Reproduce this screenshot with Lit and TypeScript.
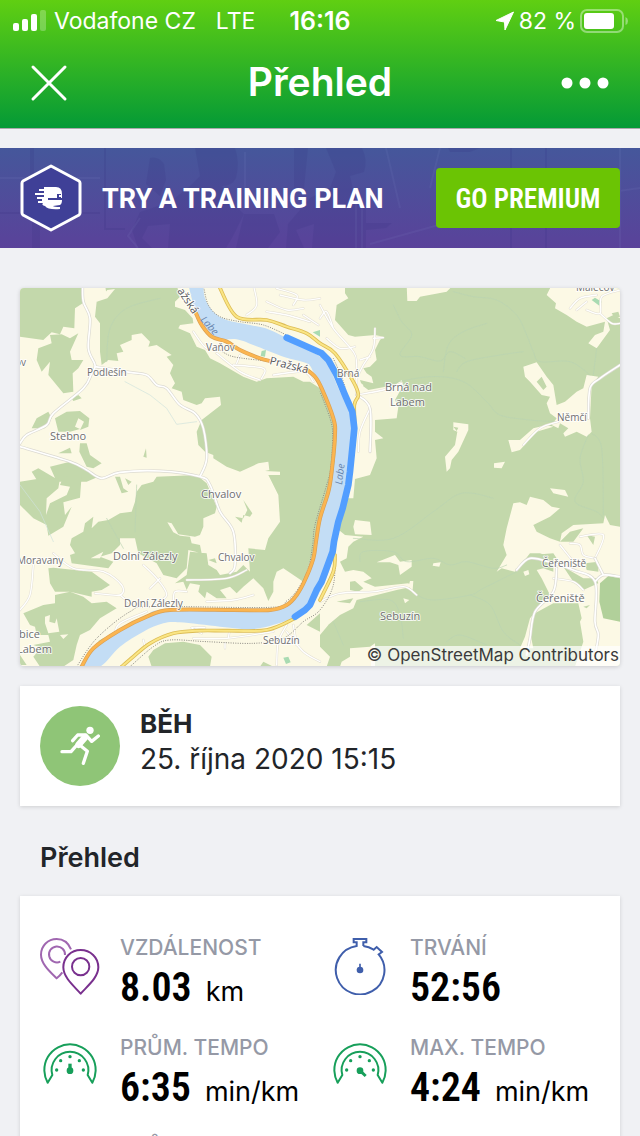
import { LitElement, html, css, svg } from "lit";
import { customElement, property } from "lit/decorators.js";

/** Turns "M x,y x,y ... M ..." polylines into curves that pass through every point. */
function smooth(path: string): string {
  return path
    .split("M")
    .filter((part) => part.trim())
    .map((part) => {
      const pts = part.trim().split(/\s+/).map((p) => p.split(",").map(Number));
      let d = `M${pts[0][0]} ${pts[0][1]}`;
      for (let i = 0; i < pts.length - 1; i++) {
        const a = pts[Math.max(i - 1, 0)];
        const b = pts[i];
        const c = pts[i + 1];
        const e = pts[Math.min(i + 2, pts.length - 1)];
        d += `C${b[0] + (c[0] - a[0]) / 6} ${b[1] + (c[1] - a[1]) / 6} ${c[0] - (e[0] - b[0]) / 6} ${c[1] - (e[1] - b[1]) / 6} ${c[0]} ${c[1]}`;
      }
      return d;
    })
    .join("");
}

const river = smooth(
  "M505,0 530,90 560,145 600,163 650,163 700,180 790,215 860,235 880,260 900,290 925,350 945,430 950,470 940,560 930,620 905,690 890,760 885,810 860,880 835,930 800,960 750,975 650,978 430,975 380,990 290,1040 215,1100 185,1145 240,1145 300,1085 370,1040 430,1015 480,1012 600,1025 700,1032 790,1010 830,990 880,950 900,920 930,850 945,760 975,650 985,560 1000,440 995,390 960,320 920,230 900,215 830,175 750,135 690,120 620,105 580,80 555,40 550,0"
);
const roads = smooth(
  "M188,0 190,50 210,100 205,190 225,240 215,265 190,310 100,385 80,420 20,450 0,475M225,245 330,262 380,270 410,300 440,310 480,360 525,385 550,430 560,520 540,575M0,485 150,530 200,555 245,580 300,562 420,558 540,575 570,600 600,680 640,740 645,840 630,865M1010,330 1050,370 1050,500M1800,240 1740,280 1710,310 1705,400M1490,855 1530,820 1600,835 1660,855 1725,890 1725,1010 1735,1050 1725,1110M1725,890 1750,870 1800,875M1610,850 1600,920 1545,980 1530,1060 1520,1110M1725,820 1750,870"
);
const streets = smooth(
  "M40,840 30,930 0,975M100,805 160,850 250,860 305,900 300,930 225,925M300,930 330,955M370,840 410,880 440,930 400,960M420,880 390,910M500,885 620,880 680,855M460,950 465,920 500,920M560,950 640,945 700,930M520,140 560,190 600,180M590,205 660,260 720,285M640,240 730,250 725,280M660,210 650,235M760,270 850,260 880,290M700,0 710,60 680,90M740,50 800,75 850,70M740,80 800,90 870,110M780,30 850,45 900,40M770,10 830,30 820,60M850,90 895,120M900,60 940,130 1000,200 1010,240 1010,330M900,100 920,80 940,130M920,160 960,190 1005,185M1065,130 1060,190 1030,240 1010,280M1060,160 1090,158M1020,225 1050,215M1010,330 1090,315 1145,295M1050,370 1020,440 1015,500M1650,70 1680,40 1730,30M1670,75 1700,50M1700,75 1740,85 1745,35 1800,15M1740,85 1775,115 1800,115M1615,410 1560,430 1510,480M1620,780 1660,830M1650,775 1680,780 1690,810 1725,820M1680,755 1750,750 1725,820M1600,880 1660,890 1690,915M900,950 960,925 1065,920 1150,905 1190,930M520,1060 620,1060 760,1040M615,1090 615,1075M770,1140 775,1070 800,1020M800,1040 850,1100 900,1130M820,1020 830,1080M370,1065 375,1085M285,1045 300,1015 380,980M545,1045 515,1028 555,1028M625,1060 628,1040"
);
const main = smooth(
  "M528,85 545,120 575,155 620,170 660,195 720,220 750,228M855,250 885,275 905,310 940,400 945,450 935,560 925,620 900,700 888,770 880,820 855,885 830,930 800,960 750,975 640,975 450,975 380,995 300,1035 220,1090 185,1145"
);
const second = smooth(
  "M598,5 650,95 740,105 800,125 860,145 900,175 945,205 1000,290 1015,330 1003,360 1004,440 992,560M945,810 940,860 900,945M825,1000 740,1035 620,1037 540,1037 460,1045 390,1075 340,1115 305,1145"
);
const rail = smooth(
  "M550,0 565,60 600,95 660,110 730,120 800,150M600,195 640,215 740,228M170,1145 230,1060 330,980 400,965 750,967 800,948 835,910 865,850 878,780 885,720 920,600 932,550 938,450 930,400 900,320M330,1145 400,1085 450,1065 560,1070 700,1075 790,1060 850,1010 900,975 940,900 945,800M940,220 970,290 990,370"
);
const tracks = smooth(
  "M1120,60 1145,110 1175,150 1140,210 1200,215 1260,228 1290,200 1335,220M1270,260 1285,180 1330,140 1400,115M1300,20 1360,35 1430,45 1490,90 1520,150 1540,200 1560,230 1650,230 1710,270M1090,300 1230,275 1330,290 1400,350 1440,390 1530,405 1610,410M1310,260 1340,230 1440,210 1510,200M1720,270 1730,190M1705,450 1680,520 1690,590 1665,650 1730,680 1750,700M1715,445 1745,490 1750,690M1000,760 1120,760 1240,680 1310,630 1360,625 1420,640M1020,830 1030,800 1120,800 1160,830 1240,820 1290,840 1340,830 1420,850 1460,840M1190,930 1240,945 1350,930 1390,910 1490,860M1350,930 1410,960 1450,1040 1500,1080M1020,950 1110,945 1140,990 1150,1060M1280,1070 1320,1050 1400,1080M940,1010 970,1080M260,230 270,130 320,70 420,40M350,600 345,740M260,700 310,790"
);

@customElement("route-map")
class RouteMap extends LitElement {
  static styles = css`
    :host { display: block; border-radius: 4px; overflow: hidden; box-shadow: 0 1px 4px rgba(0, 0, 0, 0.16); }
    .map { display: block; width: 100%; height: auto; background: #fcf9e5; }
    .wood { fill: #c3d8ab; }
    .field { fill: #fcf9e5; }
    .park { fill: #b1d09a; }
    .pitch { fill: #a9dbb2; }
    .water { fill: #c3ddf5; }
    .line { fill: none; stroke-linejoin: round; stroke-linecap: round; }
    .case { stroke: #dcdad2; stroke-width: 9; }
    .lane { stroke: #fff; stroke-width: 5; }
    .street-case { stroke: #e3dfd3; stroke-width: 7; }
    .street { stroke: #fff; stroke-width: 4; }
    .track { stroke: #b9d3b2; stroke-width: 2; }
    .brook { stroke: #cfe3dd; stroke-width: 2; }
    .main-case { stroke: #d9a055; stroke-width: 12; }
    .main { stroke: #fbb550; stroke-width: 8; }
    .second-case { stroke: #dcbc55; stroke-width: 11; }
    .second { stroke: #fae584; stroke-width: 6; }
    .rail { stroke: #8d8b84; stroke-width: 3; stroke-dasharray: 3 4; stroke-linecap: butt; }
    .route { stroke: #529eff; stroke-width: 20; }
    .label { font-family: "Open Sans", "Noto Sans", sans-serif; fill: #6f6f70; stroke: #fff; stroke-width: 2px; stroke-opacity: 0.8; paint-order: stroke; stroke-linejoin: round; }
    .small { font-size: 10px; }
    .large { font-size: 11px; }
    .street-name { fill: #55555a; font-size: 11px; }
    .river-name { font-style: italic; fill: #6684ad; stroke: none; font-size: 10px; }
    .strip { fill: #fff; fill-opacity: 0.7; }
    .credit { font-family: Inter, sans-serif; font-size: 17px; fill: #3b3b3b; }
  `;

  render() {
    return html`
      <svg class="map" viewBox="0 0 600 378" role="img" aria-label="Mapa">
        <g transform="scale(.33333) translate(0 -9)">
          <path class="wood" d="M0,0H185L188,55 165,70 163,130 130,125 120,148 95,142 70,165 0,155ZM55,190 95,175 90,150 125,148 150,160 175,145 150,200 155,225 190,225 175,250 158,265 160,320 130,325 85,270 90,230 65,260 50,225ZM255,0 260,30 230,50 225,95 240,115 240,200 245,240 265,225 295,228 290,205 310,200 300,180 335,165 335,150 365,145 390,170 385,185 410,180 455,210 440,215 460,240 450,265 465,295 455,310 485,320 490,345 530,360 545,355 555,340 600,335 603,360 545,405 530,440 535,480 555,500 580,510 580,520 620,545 660,560 715,535 745,530 748,555 735,558 780,560 780,590 950,590 950,400 900,310 870,290 850,290 820,275 740,280 710,290 670,275 600,235 570,220 555,195 530,185 510,145 475,130 480,120 520,115 518,100 495,75 465,65 465,50 480,35 470,0ZM35,430 50,400 85,380 95,400 75,430ZM105,400 140,380 180,378 208,400 205,425 180,435 192,410 175,400 165,425 180,432 150,440 115,440ZM180,475 200,475 210,510 245,535 220,550 200,545 178,500ZM115,505 150,488 155,505ZM35,560 55,550 115,585 60,600ZM90,545 150,530 235,575 200,590 110,590ZM370,515 378,490 380,518ZM155,340 175,330 185,340 160,348Z"/>
          <path class="field" d="M262,15 285,12 262,40 230,50Z"/>
          <g transform="translate(0 570)">
            <path class="wood" d="M0,20 65,10 120,10 115,40 80,70 78,120 90,85 140,60 150,35 120,30 130,5 185,0 180,68 130,82 135,120 155,95 130,155 85,182 80,150 40,130 0,90ZM285,5 300,5 310,40 325,50 305,55ZM315,10 335,20 325,30ZM350,50 365,30 400,20 410,5 530,0 560,25 590,95 585,115 550,130 550,155 540,180 525,185 475,178 455,145 442,142 460,172 480,182 510,185 515,205 540,210 545,235 505,225 500,280 470,310 430,300 410,265 355,235 345,190 300,190 300,210 275,235 240,245 280,260 265,280 155,265 150,240 165,235 150,210 155,190 190,170 195,145 220,125 215,160 235,140 265,135 300,115 335,110 345,80ZM510,230 560,235 565,270 590,285 600,300 650,290 670,270 690,290 685,220 735,225 745,190 780,140 775,60 745,0 940,0 900,130 880,230 850,320 820,300 790,280 770,290 760,320 760,350 745,378 730,340 700,310 670,335 650,355 630,335 600,345 620,370 590,370 560,350 555,370 535,350 540,330 510,325 500,345 490,320 465,325 500,300ZM670,75 697,115 690,125 670,120 665,143 645,125 670,130 682,105ZM565,255 585,250 590,265ZM85,280 100,278 215,290 270,330 245,345 215,350 215,365 150,350 105,350 90,325ZM10,415 70,390 105,385 105,360 150,350 190,365 215,385 260,380 290,400 240,430 210,465 180,480 170,510 150,545 70,520 40,510 90,500 85,480 50,480 45,455 30,450ZM40,545 70,510 170,510 160,555 130,575 60,575ZM385,545 400,525 435,505 490,500 540,510 575,545 570,575 395,575ZM860,450 900,415V470ZM720,575 730,560 760,575ZM0,540 20,570H0Z"/>
            <path class="field" d="M212,250 250,230 240,250ZM75,425 90,420 88,440 105,445 110,430 118,470 85,475 75,445ZM120,480 145,478 130,492Z"/>
            <path class="pitch" d="M790,548 805,545 812,562 798,567ZM235,498 250,490 255,500 240,508Z"/>
          </g>
          <g transform="translate(900 0)">
            <path class="wood" d="M0,0H900V1150H0V590H60L130,300 0,200Z"/>
            <path class="field" d="M0,0H75V25L85,40 50,60 45,105 85,150 105,155 165,150 190,155 180,165 165,195 170,225 150,245 130,250 140,265 155,275 160,295 120,285 125,300 145,315 225,300 245,285 250,300 225,345 235,365 230,400 165,405 165,440 190,460 165,465 170,520 150,570 105,582 100,640 H60V400L0,250ZM260,0H400L380,20 300,35 290,48 262,48ZM695,0H900V100L880,90 860,100 870,135 830,190 805,175 825,150 850,140 855,110 800,125 770,110 740,90 705,70 708,55 680,30ZM610,245 650,232 680,275 700,300 710,360 735,350 770,320 790,310 800,270 835,275 815,300 810,400 815,440 800,455 770,440 735,455 730,445 745,430 720,415 715,430 695,420 710,400 690,385 680,355 690,335 665,330 630,290 615,275ZM565,465 600,465 640,430 680,420 700,425 650,440 600,495 575,502ZM522,535 555,530 545,550 522,548ZM400,412 445,418V435L415,500 395,525 390,550 380,560 375,515 405,480 412,440 400,435Z"/>
            <path class="wood" d="M650,290 665,275 680,305 670,315ZM875,85 895,80 900,95 885,100ZM400,425 415,428 410,438Z"/>
            <path class="pitch" d="M815,45 825,38 845,50 838,62ZM-22,142 0,135V155Z"/>
          </g>
          <g transform="translate(900 570)">
            <path class="field" d="M50,160 75,180 130,185 100,200 85,215 80,250 60,260 75,290 100,285 130,290 155,310 130,320 165,335 265,325 275,335 230,345 110,375 100,400 60,420 0,470V200ZM0,460 25,450 0,480ZM0,515 30,545 20,575H0ZM90,520 150,515 165,505V575H60L65,560 90,545ZM105,135 150,140 155,180 105,178 100,155ZM170,262 225,240 240,260 275,255V275L240,300 235,270 210,262ZM340,265 362,262 358,275 338,272ZM270,318 280,318 278,345 265,335ZM250,370 268,375 255,385ZM610,290 625,285 628,298 615,303ZM690,40 735,45 745,65 700,55ZM580,85 600,82 620,90 630,65 670,75 695,95 720,100 690,125 640,150 650,170 690,190 720,200 725,175 760,150 850,145 855,120 870,150 900,155V575H765L790,500 780,440 785,430 775,385 700,385 645,415 632,480 640,520 600,520 615,485 630,430 690,360 665,310 650,285 670,280 700,290 700,250 660,235 630,235 610,260 585,290 545,280 530,290 560,240 550,210 560,160Z"/>
            <path class="wood" d="M90,320 105,318 130,340 115,350 90,345ZM730,275 790,310 830,310 835,325 790,345 760,320ZM800,180 825,185 820,210ZM795,265 835,260V290L800,285ZM635,240 700,235 710,250 660,252ZM720,200 750,170 790,160 760,200ZM790,395 810,390 800,400ZM50,380 100,370 90,385Z"/>
            <path class="park" d="M840,325 865,303 900,310V440L850,430 838,380Z"/>
          </g>
          <path class="line track" d=${tracks} />
          <path class="line brook" d="M315,290 390,330 440,370 470,418 530,410M0,600 60,680 100,770"/>
          <path class="water" d=${river} />
          <path class="line street-case" d=${streets} />
          <path class="line street" d=${streets} />
          <path class="line case" d=${roads} />
          <path class="line lane" d=${roads} />
          <path class="line rail" d=${rail} />
          <path class="line main-case" d=${main} />
          <path class="line main" d=${main} />
          <path class="line second-case" d=${second} />
          <path class="line second" d=${second} />
          <path class="pitch" d="M725,198 738,195 735,215 722,213Z"/>
          <path class="line route" d="M800,158 850,180 905,205 925,225 950,270 975,330 997,380 1003,430 997,490 990,560 985,600 968,670 955,710 942,770 938,800 905,890 890,915 870,960 855,975 825,995"/>
        </g>
        <g class="label small">
          <text x="67" y="88">Podlešín</text>
          <text x="186" y="63">Vaňov</text>
          <text x="-5" y="78">ov</text>
          <text x="317" y="89">Brná</text>
          <text x="537" y="133">Němčí</text>
          <text x="556" y="3">Malečov</text>
          <text x="198" y="273">Chvalov</text>
          <text x="-3" y="276">Moravany</text>
          <text x="104" y="319">Dolní Zálezly</text>
          <text x="243" y="356">Sebuzín</text>
          <text x="522" y="279">Čeřeniště</text>
        </g>
        <g class="label large">
          <text x="30" y="152">Stebno</text>
          <text x="181" y="210">Chvalov</text>
          <text x="93" y="272">Dolní Zálezly</text>
          <text x="365" y="103">Brná nad</text>
          <text x="370" y="118">Labem</text>
          <text x="360" y="332">Sebuzín</text>
          <text x="516" y="314">Čeřeniště</text>
          <text x="-1" y="350">bice</text>
          <text x="-3" y="365">Labem</text>
        </g>
        <text class="label street-name" x="249" y="76" transform="rotate(14 249 76)">Pražská</text>
        <text class="label street-name" x="157" y="3" transform="rotate(56 157 3)">ažská</text>
        <text class="label river-name" x="180" y="32" transform="rotate(48 180 32)">Labe</text>
        <text class="label river-name" x="322" y="197" transform="rotate(-83 322 197)">Labe</text>
        <rect class="strip" x="351" y="358" width="249" height="20"/>
        <text class="credit" x="599" y="373" text-anchor="end">© OpenStreetMap Contributors</text>
      </svg>
    `;
  }
}

const gauge = (needle: unknown) => svg`
  <g fill="none" stroke="#179f5a" stroke-width="6" stroke-linejoin="round">
    <path d="M37 120L23 143A77 77 0 1 1 157 143L143 120A55 55 0 1 0 37 120Z"/>
  </g>
  <g fill="#179f5a">
    <circle cx="50" cy="105" r="5"/><circle cx="62" cy="77" r="5"/><circle cx="90" cy="65" r="5"/>
    <circle cx="118" cy="77" r="5"/><circle cx="130" cy="105" r="5"/><circle cx="90" cy="107" r="10"/>
  </g>
  ${needle}`;

const icons: Record<string, unknown> = {
  distance: svg`
    <g fill="none" stroke-width="6" stroke-linejoin="round">
      <path stroke="#a067b0" d="M93 43C85 23 69 12 50 12C24 12 3 32 3 59C3 87 31 111 50 130C56 125 62 119 67 112M75 60A24 24 0 1 0 61 80"/>
      <path stroke="#79308e" d="M122 45C93 45 70 67 70 97C70 128 103 154 122 176C141 154 175 128 175 97C175 67 151 45 122 45Z"/>
      <circle stroke="#79308e" cx="122" cy="95" r="26"/>
    </g>`,
  duration: svg`
    <g fill="none" stroke="#3f5eab" stroke-width="6">
      <path d="M100 33V22H109V12H71V22H80V33A73 73 0 1 0 146 58L156 51L140 36L131 44A73 73 0 0 0 100 33"/>
      <path stroke-width="5" d="M90 86V100"/>
    </g>
    <circle cx="90" cy="105" r="10" fill="#3f5eab"/>`,
  average: gauge(svg`<path d="M90 86V107" stroke="#179f5a" stroke-width="10"/>`),
  maximum: gauge(svg`<path d="M90 107L107 123" stroke="#179f5a" stroke-width="9"/>`),
};

@customElement("stat-item")
class StatItem extends LitElement {
  @property() icon = "";
  @property() label = "";
  @property() value = "";
  @property() unit = "";

  static styles = css`
    :host { display: flex; gap: 20px; height: 100px; }
    .icon { width: 60px; height: 60px; flex: none; }
    .name { margin: 0; font-size: 21px; line-height: 26px; font-weight: 500; color: #9599a6; white-space: nowrap; }
    .reading { margin: 0; display: flex; align-items: baseline; gap: 14px; line-height: 54px; color: #000; white-space: nowrap; }
    .value { font-family: "Roboto Condensed", Roboto, sans-serif; font-weight: 600; font-size: 40px; }
    .unit { font-size: 27px; }
  `;

  render() {
    return html`
      <svg class="icon" viewBox="0 0 180 180" aria-hidden="true">${icons[this.icon]}</svg>
      <div>
        <p class="name">${this.label}</p>
        ${this.value
          ? html`<p class="reading"><span class="value">${this.value}</span>${this.unit ? html`<span class="unit">${this.unit}</span>` : ""}</p>`
          : ""}
      </div>
    `;
  }
}

@customElement("app-root")
class AppRoot extends LitElement {
  static styles = css`
    :host { display: flex; flex-direction: column; height: 100vh; overflow: hidden; background: #f0f1f4; font-family: Inter, "Open Sans", sans-serif; color: #222529; }
    h1, h2, p { margin: 0; }
    button { border: 0; background: none; padding: 0; color: inherit; font-family: inherit; }
    svg { display: block; }
    .top { flex: none; color: #fff; background: linear-gradient(#60cf12, #049a36); border-bottom: 1px solid #a9aaab; }
    .status { display: grid; grid-template-columns: 1fr auto 1fr; align-items: center; height: 40px; padding: 2px 12px 0; box-sizing: border-box; font-size: 23px; white-space: nowrap; }
    .carrier { display: flex; align-items: center; gap: 8px; }
    .network { margin-left: 12px; }
    .clock { font-weight: 600; font-size: 25px; }
    .power { display: flex; align-items: center; justify-content: flex-end; gap: 4px; }
    .nav { display: grid; grid-template-columns: 60px 1fr 60px; align-items: center; height: 84px; padding: 0 19px 4px; }
    .title { font-size: 39px; line-height: 48px; font-weight: 600; text-align: center; }
    .more { justify-self: end; }
    .close { justify-self: start; }
    .body { flex: 1; min-height: 0; overflow-y: auto; scrollbar-width: none; padding: 19px 0; }
    .banner { display: grid; height: 100px; background: linear-gradient(#45579b, #5a429a); }
    .photo { grid-area: 1 / 1; width: 100%; height: 100px; }
    .offer { grid-area: 1 / 1; display: flex; align-items: center; padding: 0 20px; z-index: 1; color: #fff; white-space: nowrap; }
    .pitch { flex: 1; padding: 2px 0 0 20px; font-family: Roboto, sans-serif; font-weight: 700; font-size: 27px; line-height: 32px; }
    .premium { width: 184px; height: 60px; padding-top: 2px; border-radius: 4px; background: #6bc404; font-family: "Roboto Condensed", Roboto, sans-serif; font-weight: 600; font-size: 27px; }
    .column { display: flex; flex-direction: column; padding: 40px 20px 0; }
    .card { background: #fff; box-shadow: 0 1px 4px rgba(0, 0, 0, 0.14); }
    .activity { display: flex; gap: 20px; margin-top: 20px; padding: 20px; }
    .badge { width: 80px; height: 80px; }
    .kind { font-size: 26px; line-height: 36px; font-weight: 700; }
    .when { font-size: 28px; line-height: 34px; }
    .section { padding: 33px 20px 19px; font-size: 27px; line-height: 38px; font-weight: 600; }
    .stats { display: grid; grid-template-columns: 1fr 1fr; padding: 39px 0 20px 20px; }
  `;

  render() {
    return html`
      <header class="top">
        <div class="status">
          <div class="carrier">
            <svg width="34" height="22" viewBox="0 0 34 22" fill="#fff" aria-hidden="true">
              <rect x="1" y="13" width="6" height="8" rx="2"/><rect x="10" y="9" width="6" height="12" rx="2"/>
              <rect x="19" y="4" width="6" height="17" rx="2"/><rect x="28" y="0" width="6" height="21" rx="2" opacity=".25"/>
            </svg>
            <span>Vodafone CZ</span><span class="network">LTE</span>
          </div>
          <span class="clock">16:16</span>
          <div class="power">
            <svg width="20" height="20" viewBox="0 0 20 20" aria-hidden="true"><path fill="#fff" stroke="#fff" stroke-linejoin="round" d="M18.500 1L1 9.500L9.500 11L10 19Z"/></svg>
            <span>82 %</span>
            <svg width="48" height="24" viewBox="0 0 48 24" aria-hidden="true">
              <rect x="1" y="1" width="42" height="22" rx="6" fill="none" stroke="#fff" stroke-opacity=".4" stroke-width="2"/>
              <rect x="4" y="4" width="30" height="16" rx="3" fill="#fff"/>
              <path d="M45.500 8Q48 9 48 12T45.500 16Z" fill="#fff" opacity=".4"/>
            </svg>
          </div>
        </div>
        <div class="nav">
          <button class="close" aria-label="Zavřít">
            <svg width="60" height="60" viewBox="0 0 60 60"><path d="M14 15L46 47M46 15L14 47" stroke="#fff" stroke-width="3" stroke-linecap="round"/></svg>
          </button>
          <h1 class="title">Přehled</h1>
          <button class="more" aria-label="Více">
            <svg width="60" height="60" viewBox="0 0 60 60" fill="#fff"><circle cx="6" cy="31" r="5.500"/><circle cx="24" cy="31" r="5.500"/><circle cx="42" cy="31" r="5.500"/></svg>
          </button>
        </div>
      </header>
      <main class="body">
        <section class="banner">
          <svg class="photo" viewBox="0 0 640 100" preserveAspectRatio="xMidYMid slice" aria-hidden="true">
            <g fill="#2f2878" opacity=".13">
              <path d="M195 0H235Q240 14 236 30Q232 38 222 38L232 55L244 66L232 90L226 100H168L170 76L148 78L142 90L152 100H138L132 82L140 64L170 54L190 38L200 28Z"/>
              <path d="M326 0H362Q368 12 364 24L350 28L354 46L366 60L366 100H312L314 76L296 82L304 100H286L288 76L310 50L330 40L336 24Z"/>
              <path d="M150 10Q158 8 164 16L166 32L160 48L146 36ZM294 0H308L304 40H294ZM30 0H34V64H30ZM32 64H40V100H32ZM244 66H274L280 84 268 100H236ZM448 0H480L470 4H450Z"/>
              <path d="M104 0H106V80H125V82H104ZM0 64H100V66H0ZM510 0H512V100H510ZM545 0H547V100H545ZM366 75H392L386 80 366 82Z"/>
            </g>
            <g fill="none" stroke="#8890cc" opacity=".1" stroke-width="2"><path d="M0 30H100M245 4V60M370 96L500 60L640 40M386 0L400 60M140 70L128 88L138 100M356 50V100M362 50V100M440 0L430 40M620 0V100"/></g>
          </svg>
          <div class="offer">
            <svg width="62" height="68" viewBox="0 0 62 68" aria-hidden="true">
              <path d="M31 2L59 17Q60 18 60 19V49Q60 50 59 51L31 66L3 51Q2 50 2 49V19Q2 18 3 17Z" fill="#3f4097" stroke="#fff" stroke-width="3" stroke-linejoin="round"/>
              <path d="M24 23H36Q42 23 42 30V34H28V36H42Q42 40 40 41L33 42Q34 43 40 43V45Q28 46 25 42Q21 41 23 39H18V37H22V35H17V33H24V31H15V29H24V27H19V25H24Z" fill="#fff"/>
              <path d="M37 30H41V34H37Z" fill="#3f4097"/><path d="M39 31H42V33H39Z" fill="#fff"/>
            </svg>
            <p class="pitch">TRY A TRAINING PLAN</p>
            <button class="premium">GO PREMIUM</button>
          </div>
        </section>
        <div class="column">
          <route-map></route-map>
          <section class="card activity">
            <svg class="badge" viewBox="0 0 240 240" aria-hidden="true">
              <circle cx="120" cy="120" r="120" fill="#8fc577"/>
              <circle cx="150" cy="73" r="11" fill="#fff"/>
              <g fill="none" stroke="#fff" stroke-linejoin="round" stroke-linecap="round">
                <path stroke-width="10" d="M98 104L113 87H138L155 106L175 90M108 120L93 137H66M120 118L142 136L130 172"/>
                <path stroke-width="20" d="M135 94L116 116"/>
              </g>
            </svg>
            <div>
              <h2 class="kind">BĚH</h2>
              <p class="when">25. října 2020 15:15</p>
            </div>
          </section>
          <h2 class="section">Přehled</h2>
          <section class="card stats">
            <stat-item icon="distance" label="VZDÁLENOST" value="8.03" unit="km"></stat-item>
            <stat-item icon="duration" label="TRVÁNÍ" value="52:56"></stat-item>
            <stat-item icon="average" label="PRŮM. TEMPO" value="6:35" unit="min/km"></stat-item>
            <stat-item icon="maximum" label="MAX. TEMPO" value="4:24" unit="min/km"></stat-item>
            <stat-item label="PRŮM. RYCHLOST"></stat-item>
          </section>
        </div>
      </main>
    `;
  }
}
